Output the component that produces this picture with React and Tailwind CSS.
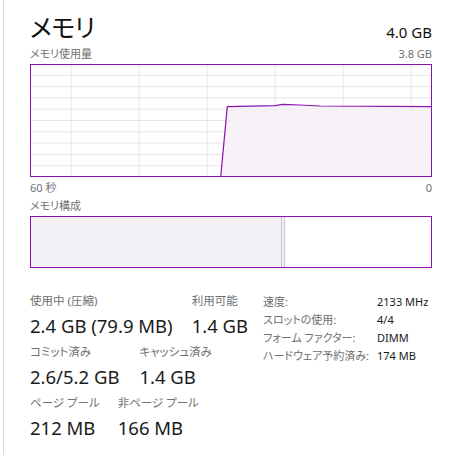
import React from 'react';

const font = {
    fontFamily: '"Segoe UI", "Noto Sans", "Noto Sans CJK JP", sans-serif',
    fontFeatureSettings: '"palt"',
};

function UsageChart() {
    const rows = [1, 2, 3, 4, 5, 6, 7, 8, 9].map((k) => k * 11.3);
    const cols = [41, 109, 177, 245, 313, 381];
    const line = '190.7,113 197.3,42.7 245,41.7 253,40.3 270,41 290,42 402,42.7';
    return (
        <svg width="402" height="113" viewBox="0 0 402 113" className="block">
            {rows.map((y) => (
                <line key={'h' + y} x1="0" x2="402" y1={y} y2={y} stroke="#e9e4eb" strokeWidth="1" />
            ))}
            {cols.map((x) => (
                <line key={'v' + x} x1={x} x2={x} y1="0" y2="113" stroke="#e9e4eb" strokeWidth="1" />
            ))}
            <polygon points={line + ' 402,113'} fill="#f4f0f6" fillOpacity="0.85" />
            <polyline points={line} fill="none" stroke="#8b12ae" strokeWidth="1.2" />
            <rect x="0.5" y="0.5" width="401" height="112" fill="none" stroke="#8b12ae" strokeWidth="1" />
        </svg>
    );
}

function Stat({ label, value }) {
    return (
        <div className="flex flex-col">
            <span className="text-[11.5px] leading-[16px] text-[#707070]">{label}</span>
            <span className="text-[18.5px] leading-[24px] text-[#1a1a1a] mt-[5px]">{value}</span>
        </div>
    );
}

export default function App() {
    return (
        <div className="w-[455px] h-[464px] bg-white overflow-hidden" style={font}>
            <div className="ml-[3px] h-[455px] border-l border-[#d9d9d9] pl-[26px] w-[429px]">
                <div className="flex items-end justify-between h-[44px]">
                    <span className="text-[25px] leading-[32px] text-[#111] tracking-[-0.5px] mb-[1px]">メモリ</span>
                    <span className="text-[15px] leading-[20px] text-[#111] mb-[2px]">4.0 GB</span>
                </div>
                <div className="flex justify-between text-[11px] leading-[14px] text-[#707070] mt-[3px]">
                    <span>メモリ使用量</span>
                    <span>3.8 GB</span>
                </div>
                <div className="mt-[3px]">
                    <UsageChart />
                </div>
                <div className="flex justify-between text-[11px] leading-[14px] text-[#707070] mt-[4px]">
                    <span>60 秒</span>
                    <span>0</span>
                </div>
                <div className="text-[11px] leading-[14px] text-[#707070] mt-[4px]">メモリ構成</div>
                <div className="mt-[3px] w-[402px] h-[52px] border border-[#8b12ae] flex">
                    <div className="w-[250px] bg-[#f3f1f5]"></div>
                    <div className="w-[4px] border-x border-[#cdbfd3] bg-[#f3f1f5]"></div>
                    <div className="flex-1 bg-white"></div>
                </div>
                <div className="flex mt-[25px]">
                    <div className="flex flex-col gap-[6px] w-[233px]">
                        <div className="flex gap-[19px]">
                            <Stat label="使用中 (圧縮)" value="2.4 GB (79.9 MB)" />
                            <Stat label="利用可能" value="1.4 GB" />
                        </div>
                        <div className="flex gap-[20px]">
                            <Stat label="コミット済み" value="2.6/5.2 GB" />
                            <Stat label="キャッシュ済み" value="1.4 GB" />
                        </div>
                        <div className="flex gap-[18px]">
                            <Stat label="ページ プール" value="212 MB" />
                            <Stat label="非ページ プール" value="166 MB" />
                        </div>
                    </div>
                    <div className="grid grid-cols-[114px_auto] auto-rows-[18px] text-[11px] leading-[18px] text-[#1a1a1a]">
                        <span className="text-[#707070]">速度:</span>
                        <span>2133 MHz</span>
                        <span className="text-[#707070]">スロットの使用:</span>
                        <span>4/4</span>
                        <span className="text-[#707070]">フォーム ファクター:</span>
                        <span>DIMM</span>
                        <span className="text-[#707070]">ハードウェア予約済み:</span>
                        <span>174 MB</span>
                    </div>
                </div>
            </div>
        </div>
    );
}
